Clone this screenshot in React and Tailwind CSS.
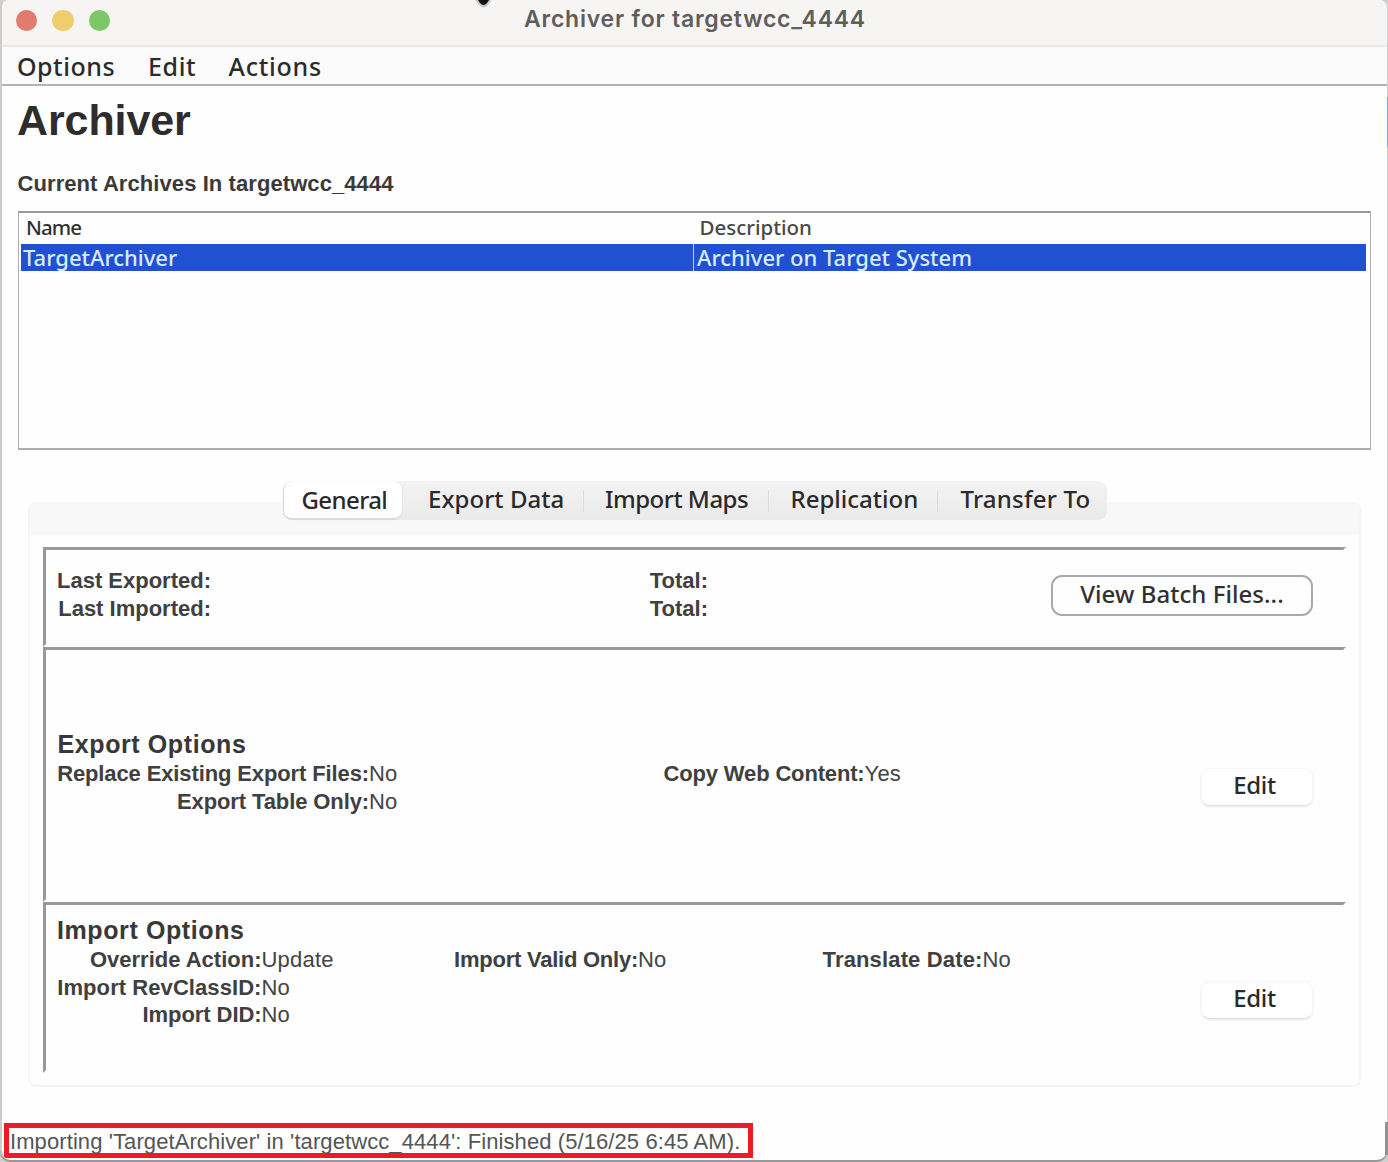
import React from "react";

const SYSTEM = "font-['Noto_Sans',sans-serif]";
const HELV = "font-['Liberation_Sans',Arial,sans-serif]";

function Menu({ children, className }) {
  return <button className={`whitespace-pre text-left text-[25px] font-medium leading-[34px] text-[#2b2b2b] ${className}`}>{children}</button>;
}

function Tab({ children, selected, className }) {
  return (
    <div
      className={`flex items-center whitespace-pre text-[24px] font-medium leading-[34px] text-[#2a2a2a] ${
        selected ? "rounded-[9px] border-b-2 border-l border-b-[#dadada] border-l-[#d6d6d6] bg-white shadow-[1px_0_1px_#e6e6e6]" : ""
      } ${className}`}
    >
      {children}
    </div>
  );
}

function Divider() {
  return <div className="mt-[9px] h-[22px] w-px bg-[#dcdcdc]" />;
}

function Group({ children, className }) {
  return (
    <section
      className={`flex w-[1303px] justify-between border-[3px] border-b-transparent border-l-[#989898] border-r-transparent border-t-[#989898] pr-[30px] ${className}`}
    >
      {children}
    </section>
  );
}

function Field({ label, value, width, className = "" }) {
  return (
    <div className="flex h-[27.5px] items-center whitespace-pre text-[22px] leading-[27px]">
      <b className={`shrink-0 text-right text-[#404040] ${width} ${className}`}>{label}</b>
      {value && <span className="tracking-[0.2px] text-[#444]">{value}</span>}
    </div>
  );
}

function EditButton({ className }) {
  return (
    <button
      className={`${SYSTEM} h-[38px] w-[112px] rounded-[9px] border border-[#f7f7f7] border-b-[#e2e2e2] bg-white pb-[5px] pr-[5px] text-[24px] font-medium leading-[32px] tracking-[-0.3px] text-[#2a2a2a] shadow-[0_1px_2px_#e4e4e4] ${className}`}
    >
      Edit
    </button>
  );
}

export default function App() {
  return (
    <div className="relative h-[1162px] w-[1388px] overflow-hidden bg-[#cfcfcf]">
      <div className={`${HELV} flex h-[1160px] w-[1387px] flex-col overflow-hidden rounded-b-[10px] rounded-t-[8px] border-l-2 border-[#cccccc] bg-[#fefefe] shadow-[0_2px_0_#989898]`}>
        <header className="relative h-[47px] shrink-0 border-b-2 border-[#ebe9e8] bg-[#f6f5f4]">
          <div className="absolute left-[13.5px] top-[9.5px] flex gap-[15px]">
            <span className="size-[21.5px] rounded-full bg-[#e17b70]" />
            <span className="size-[21.5px] rounded-full bg-[#efcd6c]" />
            <span className="size-[21.5px] rounded-full bg-[#7cc867]" />
          </div>
          <h1 className="whitespace-pre pl-[522px] font-['Inter',sans-serif] text-[23px] font-semibold leading-[39px] tracking-[0.78px] text-[#605e5c]">
            Archiver for targetwcc_4444
          </h1>
          <svg className="absolute left-[473px] top-0" width="17" height="8" viewBox="0 0 17 8">
            <path d="M0.500 0 Q8.500 15 16.500 0Z" fill="#c8c8c8" />
            <path d="M3 0 Q8.500 10 14 0Z" fill="#111" />
          </svg>
        </header>

        <nav className={`${SYSTEM} flex h-[39px] shrink-0 border-b-2 border-[#b4b4b4] bg-[#fbfbfb] pl-[15px]`}>
          <Menu className="w-[131px] tracking-[0.5px]">Options</Menu>
          <Menu className="w-[80.5px] tracking-[0.6px]">Edit</Menu>
          <Menu className="tracking-[0.75px]">Actions</Menu>
        </nav>

        <div className="ml-[15px] mt-[11px] h-[47px] shrink-0 text-[43px] font-bold leading-[47px] tracking-[-0.1px] text-[#2d2d2d]">Archiver</div>
        <div className="ml-[15.500px] mt-[26px] h-[28px] shrink-0 text-[22px] font-bold leading-[28px] tracking-[0.08px] text-[#3a3a3a]">
          Current Archives In targetwcc_4444
        </div>

        <div className={`${SYSTEM} ml-[15.5px] mt-[13px] h-[239px] w-[1353.500px] shrink-0 border-[1.500px] border-b-2 border-t-2 border-[#adadad] border-t-[#989898] bg-[#fefefe] pl-[2px] pr-[4px]`}>
          <div className="flex h-[31px] whitespace-pre text-[20.5px] font-medium leading-[29px] text-[#303030]">
            <span className="w-[673px] pl-[5.5px] tracking-[-0.9px]">Name</span>
            <span className="pl-[6px] text-[#484848]">Description</span>
          </div>
          <div className="flex h-[27px] whitespace-pre bg-[#2151d2] text-[22px] font-medium leading-[26px] text-[#d8ebff]">
            <span className="w-[673.500px] border-r border-[#b5cfff] pl-[2.500px]">TargetArchiver</span>
            <span className="pl-[3px]">Archiver on Target System</span>
          </div>
        </div>

        <div className={`${SYSTEM} relative z-10 ml-[281px] mt-[31px] flex h-[39px] w-[824px] shrink-0 rounded-[9px] bg-gradient-to-b from-[#f3f3f3] to-[#eaeaea]`}>
          <Tab selected className="w-[119px] pl-[17.500px] tracking-[-0.6px]">General</Tab>
          <Tab className="w-[181px] pb-[3px] pl-[26px] tracking-[0.05px]">Export Data</Tab>
          <Divider />
          <Tab className="w-[184px] pb-[3px] pl-[21px] tracking-[-0.5px]">Import Maps</Tab>
          <Divider />
          <Tab className="w-[168px] pb-[3px] pl-[21.500px]">Replication</Tab>
          <Divider />
          <Tab className="pb-[3px] pl-[22.500px] tracking-[0.2px]">Transfer To</Tab>
        </div>

        <main className="ml-[26px] mt-[-18px] h-[585px] w-[1333px] shrink-0 rounded-[8px] border-2 border-t-0 border-[#f5f5f5] bg-[linear-gradient(#f8f8f8_33px,#fefefe_34px)] pl-[13px] pt-[45px]">
          <Group className="h-[100px]">
            <div className="flex pt-[17px]">
              <div>
                <Field label="Last Exported:" width="w-[165px]" />
                <Field label="Last Imported:" width="w-[165px]" />
              </div>
              <div>
                <Field label="Total:" width="w-[497px]" />
                <Field label="Total:" width="w-[497px]" />
              </div>
            </div>
            <button className={`${SYSTEM} mt-[25px] h-[41px] w-[262px] whitespace-pre rounded-[11px] border-2 border-[#a5aab0] bg-[#fefefe] pb-[3px] text-[24px] font-medium leading-[34px] tracking-[0.05px] text-[#303030]`}>
              View Batch Files...
            </button>
          </Group>

          <Group className="h-[255px]">
            <div>
              <h3 className="pl-[11.500px] pt-[78px] text-[25px] font-bold leading-[32px] tracking-[0.6px] text-[#383838]">Export Options</h3>
              <div className="flex">
                <div>
                  <Field label="Replace Existing Export Files:" value="No" width="w-[323px]" className="tracking-[-0.12px]" />
                  <Field label="Export Table Only:" value="No" width="w-[323px]" className="tracking-[-0.11px]" />
                </div>
                <Field label="Copy Web Content:" value="Yes" width="w-[467px]" className="tracking-[-0.16px]" />
              </div>
            </div>
            <EditButton className="mt-[118px]" />
          </Group>

          <Group className="h-[171px]">
            <div>
              <h3 className="pl-[11px] pt-[9px] text-[25px] font-bold leading-[32px] tracking-[0.6px] text-[#383838]">Import Options</h3>
              <div className="flex">
                <div className="w-[332px]">
                  <Field label="Override Action:" value="Update" width="w-[215.5px]" />
                  <Field label="Import RevClassID:" value="No" width="w-[215.5px]" className="tracking-[0.07px]" />
                  <Field label="Import DID:" value="No" width="w-[215.5px]" className="tracking-[-0.07px]" />
                </div>
                <Field label="Import Valid Only:" value="No" width="w-[260px]" className="tracking-[-0.24px]" />
                <Field label="Translate Date:" value="No" width="w-[316px]" className="tracking-[0.15px]" />
              </div>
            </div>
            <EditButton className="mt-[76px]" />
          </Group>
        </main>

        <footer className="ml-[2px] mt-[36px] h-[35px] w-[749px] shrink-0 whitespace-pre border-[5px] border-[#ed1c24] pl-[1px] text-[22px] leading-[27px] tracking-[0.09px] text-[#555]">
          Importing 'TargetArchiver' in 'targetwcc_4444': Finished (5/16/25 6:45 AM).
        </footer>
      </div>

      <div className="absolute right-0 top-[97px] h-[50px] w-px bg-[#78a9f0]" />
      <div className="absolute right-0 top-[1122px] h-[33px] w-[3px] bg-[#929292]" />
    </div>
  );
}
